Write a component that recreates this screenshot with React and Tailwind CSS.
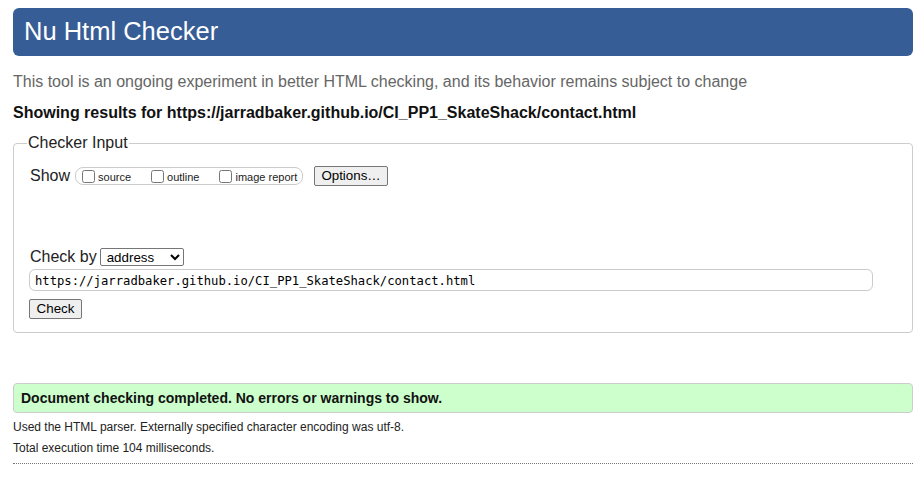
import React from 'react';

const sans = { fontFamily: '"Liberation Sans", Arial, sans-serif' };

const Check = ({ label }) => (
  <label className="flex items-center gap-[3px] text-[11px] text-[#222]">
    <input type="checkbox" className="m-0 h-[13px] w-[13px]" />
    <span className="leading-[13px] pt-[3px]">{label}</span>
  </label>
);

export default function App() {
  return (
    <div className="min-h-screen bg-white text-[#222]" style={sans}>
      <div className="ml-[13px] w-[900px] pt-[8px]">
        {/* Header */}
        <div className="h-[48px] rounded-[6px] bg-[#365d96] px-[11px] flex items-center">
          <h1 className="text-[25.5px] text-white leading-none">Nu Html Checker</h1>
        </div>

        <p className="mt-[16px] text-[16px] leading-[20px] text-[#666]">
          This tool is an ongoing experiment in better HTML checking, and its behavior remains subject to change
        </p>
        <p className="mt-[11px] text-[16px] leading-[20px] font-bold text-[#111]">
          Showing results for https://jarradbaker.github.io/CI_PP1_SkateShack/contact.html
        </p>

        {/* Checker input */}
        <fieldset className="mt-[10px] border border-[#ccc] rounded-[4px] pl-[13px] pr-[13px] pb-[12px]">
          <legend className="px-[1px] text-[16px] leading-[20px] text-[#222]">Checker Input</legend>
          <div className="pl-[2px]">
            <div className="mt-[13px] flex items-center h-[20px]">
              <span className="text-[16px] leading-[20px] pl-[1px]">Show</span>
              <div className="ml-[5px] h-[18px] w-[228px] rounded-[8px] border border-[#ccc] flex items-center gap-[20px] pl-[6px]">
                <Check label="source" />
                <Check label="outline" />
                <Check label="image report" />
              </div>
              <button className="ml-[11px] h-[20px] w-[74px] rounded-[2px] border border-[#767676] bg-[#efefef] text-[13.33px] leading-none text-black">
                Options…
              </button>
            </div>

            <div className="mt-[61px] flex items-center h-[20px]">
              <span className="text-[16px] leading-[20px] pl-[1px]">Check by</span>
              <select className="ml-[3px] h-[18px] w-[84px] rounded-[2px] border border-[#767676] bg-white pl-[2px] text-[13.33px] leading-none text-black">
                <option>address</option>
              </select>
            </div>

            <div className="mt-[2px] h-[22px] w-[844px] rounded-[6px] border border-[#ccc] flex items-center px-[5px]">
              <span className="text-[12.2px] leading-none text-black pt-[2px]" style={{ fontFamily: '"DejaVu Sans Mono", "Liberation Mono", monospace' }}>
                https://jarradbaker.github.io/CI_PP1_SkateShack/contact.html
              </span>
            </div>

            <button className="mt-[8px] h-[20px] w-[53px] rounded-[2px] border border-[#767676] bg-[#efefef] text-[13.33px] leading-none text-black">
              Check
            </button>
          </div>
        </fieldset>

        {/* Result */}
        <div className="mt-[50px] h-[30px] rounded-[4px] border border-[#ccc] bg-[#ccffcc] flex items-center pl-[7px]">
          <span className="text-[14px] font-bold text-[#111]">Document checking completed. No errors or warnings to show.</span>
        </div>

        <p className="mt-[6px] text-[12px] leading-[16px] text-[#222]">
          Used the HTML parser. Externally specified character encoding was utf-8.
        </p>
        <p className="mt-[5px] text-[12px] leading-[16px] text-[#222]">Total execution time 104 milliseconds.</p>

        <div className="mt-[7px] border-t border-dotted border-[#777]" />
      </div>
    </div>
  );
}
